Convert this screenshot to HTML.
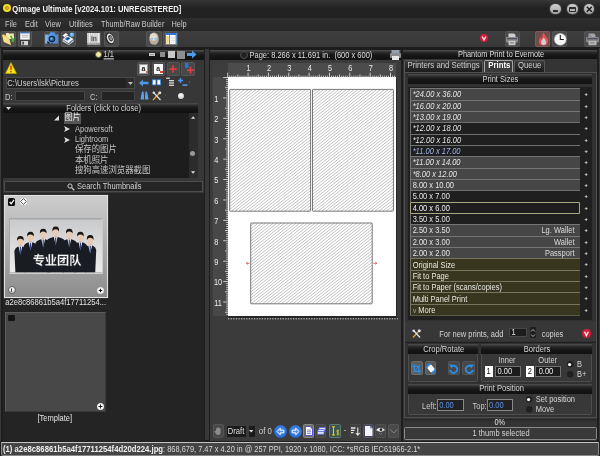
<!DOCTYPE html>
<html><head><meta charset="utf-8"><title>Qimage Ultimate</title>
<style>
html,body{margin:0;padding:0;}
body{width:600px;height:456px;overflow:hidden;background:#1d1d1d;position:relative;font-family:"Liberation Sans","Noto Sans CJK SC",sans-serif;font-size:7.5px;color:#c8c8c8;line-height:1;}
.a{position:absolute;}
.t{position:absolute;white-space:nowrap;transform:scaleY(1.1);transform-origin:0 50%;}
.bar{position:absolute;background:linear-gradient(#4e4e4e,#3b3b3b 14%,#242424 32%,#171717 55%,#111);box-sizing:border-box;text-align:center;color:#d4d4d4;}
.grp{position:absolute;border:1px solid #4e4e4e;box-sizing:border-box;background:#383838;border-radius:1.5px;}
.in{position:absolute;background:#1e1e1e;border:1px solid #555;box-sizing:border-box;}
.btn{position:absolute;background:#3f3f3f;border:1px solid #4c4c4c;box-sizing:border-box;border-radius:1.5px;}
svg{position:absolute;overflow:visible;}
</style></head><body>
<div id="app" style="position:absolute;left:0;top:0;width:600px;height:456px;will-change:transform;filter:blur(0.35px);">

<!-- TITLE BAR -->
<div class="a" id="title" style="left:0;top:0;width:600px;height:17.5px;background:linear-gradient(#363636,#2a2a2a 25%,#222 45%);"></div>
<div class="a" style="left:3px;top:4.3px;width:8px;height:8px;border-radius:50%;background:#f0e01c;"></div>
<div class="a" style="left:5px;top:6.3px;width:4px;height:4px;border-radius:50%;background:#e8b830;border:0.9px solid #c47a1c;box-sizing:border-box;"></div>
<div class="t" style="left:12.3px;top:5.9px;font-size:7.65px;font-weight:bold;color:#f2f2f2;">Qimage Ultimate [v2024.101: UNREGISTERED]</div>
<style>.wc{position:absolute;top:2.9px;width:12.6px;height:12.6px;border-radius:50%;background:linear-gradient(#cdcdcd,#a2a2a2);border:0.6px solid #3a3a3a;box-sizing:border-box;}</style>
<div class="wc" style="left:549.2px;"></div>
<div class="wc" style="left:566px;"></div>
<div class="wc" style="left:582.9px;"></div>
<div class="a" style="left:552.8px;top:9.9px;width:5.6px;height:1.7px;background:#2c2c2c;border-radius:0.6px;"></div>
<div class="a" style="left:569.1px;top:6.8px;width:6.5px;height:5.2px;border:1.1px solid #2c2c2c;border-top-width:2px;box-sizing:border-box;border-radius:0.8px;"></div>
<svg style="left:582.9px;top:2.9px;" width="13" height="13"><path d="M3.8 3.8L8.8 8.8M8.8 3.8L3.8 8.8" stroke="#1c1c1c" stroke-width="1.5"/></svg>

<!-- MENU BAR -->
<div class="a" id="menu" style="left:0;top:17.5px;width:600px;height:13px;background:linear-gradient(#2f2f2f,#272727);"></div>
<div class="t" style="left:5px;top:20.8px;font-size:7.4px;color:#cacaca;">File</div>
<div class="t" style="left:25px;top:20.8px;font-size:7.4px;color:#cacaca;">Edit</div>
<div class="t" style="left:45px;top:20.8px;font-size:7.4px;color:#cacaca;">View</div>
<div class="t" style="left:69px;top:20.8px;font-size:7.4px;color:#cacaca;">Utilities</div>
<div class="t" style="left:100.8px;top:20.8px;font-size:7.4px;transform:scale(0.975,1.1);color:#cacaca;">Thumb/Raw Builder</div>
<div class="t" style="left:171.5px;top:20.8px;font-size:7.4px;color:#cacaca;">Help</div>

<!-- TOOLBAR -->
<div class="a" id="toolbar" style="left:0;top:30.5px;width:600px;height:16.7px;background:linear-gradient(#3d3d3d,#383838);"></div>
<style>.tb{position:absolute;top:31.2px;height:15.5px;width:15px;background:#4a4a4a;border:1px solid #545454;border-radius:2px;box-sizing:border-box;}</style>
<div class="tb" style="left:1.1px;width:14.8px;"></div>
<svg style="left:0;top:0;" width="40" height="50"><path d="M5.7 33.6L8 32.8L9.8 33.8L13.6 33.2L14.2 38.4L6.5 39.5Z" fill="#f4e9b4"/><path d="M2.1 34.9L3.8 34.3L9 37.7L11.2 45.2L3.7 42Z" fill="#eccb68"/><path d="M2.4 35.2L8.6 38.2L10.4 44.4L4 41.6Z" fill="#f3de8c"/><path d="M10 36L11.6 35.6L13 39.2L14.8 38.8L13.6 42.4L10.4 41L11.8 40.4Z" fill="#3db43a"/></svg>
<div class="tb" style="left:18.3px;width:14.2px;"></div>
<svg style="left:20.1px;top:32px;" width="10" height="14"><rect x="0" y="0" width="9.9" height="13.5" rx="0.7" fill="#3a3a3a"/><rect x="0.2" y="0" width="9.5" height="7.6" fill="#f6f6f6"/><rect x="0.2" y="0" width="9.5" height="1.4" fill="#3d6db4"/><path d="M1.8 3.3H8.4M1.8 5.1H8.4" stroke="#9aa89a" stroke-width="0.7"/><rect x="1.2" y="9" width="6.9" height="4.2" fill="#d4d4d4"/><rect x="2.4" y="9.6" width="1.5" height="3" fill="#3a3a3a"/></svg>
<div class="tb" style="left:44.1px;width:14.8px;"></div>
<svg style="left:45px;top:32.4px;" width="14" height="12"><defs><linearGradient id="cam" x1="0" y1="0" x2="1" y2="0"><stop offset="0" stop-color="#8ec0f2"/><stop offset="0.35" stop-color="#5a9be2"/><stop offset="1" stop-color="#4a8ad8"/></linearGradient></defs><path d="M0.2 2.4H4.4L5.2 0.3H9.6L10.4 2.4H13.2V11.6H0.2Z" fill="url(#cam)"/><path d="M2.4 8.5Q4 12 8.5 11.6H2.4Z" fill="#0a0a10"/><circle cx="6.9" cy="7.1" r="3.3" fill="#13233c"/><circle cx="6.9" cy="7.1" r="2.2" fill="#2c5c94"/><circle cx="6.5" cy="6.6" r="1.2" fill="#6cc0f0"/></svg>
<div class="tb" style="left:60.8px;"></div>
<svg style="left:61.8px;top:32.3px;" width="14" height="13"><path d="M0.5 3.6L3.8 1L6 2.4L2.6 5.2Z" fill="#fafafa"/><path d="M0.6 7.2L5.2 3.6L11.6 7L6.8 11.2Z" fill="#eef2fa"/><path d="M2.6 6.9L5.4 4.7L8.6 6.3L5.6 8.8Z" fill="#2f7cd4"/><path d="M4.4 7.2L6.8 5.6L7.6 6L5.2 7.8Z" fill="#1a2a44"/><circle cx="10" cy="2.8" r="2.3" fill="#62aae8"/><circle cx="9.5" cy="2.3" r="1" fill="#9cd0f6"/><path d="M0.6 7.8L6.8 12.2L11.6 7.8V9.4L6.8 13L0.6 9.6Z" fill="#d0d4dc"/><path d="M7.6 10.2L10.4 8.2" stroke="#5a8ad0" stroke-width="0.8"/></svg>
<div class="tb" style="left:86.7px;width:14.7px;"></div>
<div class="a" style="left:87.3px;top:32.9px;width:13.2px;height:12px;background:#c9c9c9;"></div>
<div class="a" style="left:87.3px;top:42.5px;width:13.2px;height:2.4px;background:#8e8e8e;"></div>
<svg style="left:87.3px;top:32.9px;" width="14" height="12"><path d="M2.4 0V9.4M11.4 0V9.4" stroke="#f4f4f4" stroke-width="1"/><path d="M4.6 0V2.4M6.9 0V3.6M9.2 0V2.4" stroke="#f0f0f0" stroke-width="0.9"/><path d="M1 10.8H12.4" stroke="#e0e0e0" stroke-width="0.8" stroke-dasharray="1.4 0.8"/></svg>
<div class="t" style="left:91px;top:35.2px;font-size:7.4px;font-weight:bold;color:#505050;letter-spacing:-0.2px;transform:scale(0.9,1);">in</div>
<div class="tb" style="left:103.5px;width:15.2px;"></div>
<svg style="left:104.4px;top:32.4px;" width="12" height="13"><g transform="rotate(-22 6 6.5)"><ellipse cx="6" cy="6.5" rx="4" ry="6" fill="#1c1c1c"/><ellipse cx="6.3" cy="6.5" rx="3.2" ry="5.1" fill="#e4e4e4"/><ellipse cx="6.6" cy="6.5" rx="2" ry="3.3" fill="#3a3a3a"/><ellipse cx="6.8" cy="6.5" rx="1.1" ry="1.9" fill="#bdbdbd"/><ellipse cx="6.9" cy="6.5" rx="0.5" ry="0.9" fill="#444"/></g></svg>
<div class="tb" style="left:146px;width:15.5px;"></div>
<svg style="left:148px;top:32px;" width="12" height="14"><ellipse cx="6" cy="6.8" rx="4.8" ry="6.3" fill="#b9ad9c"/><ellipse cx="5.5" cy="5" rx="3.6" ry="3.8" fill="#e3dccf"/><path d="M2 11Q6 15 10 10.5Q8 13 6 12.5Q4 12.5 2 11Z" fill="#5a5046"/><rect x="2.6" y="6.2" width="2.4" height="1.3" fill="#7fb8e0"/><rect x="6.4" y="6.2" width="2.4" height="1.3" fill="#7fb8e0"/></svg>
<div class="tb" style="left:163px;"></div>
<svg style="left:164.7px;top:33px;" width="12" height="12"><rect x="0" y="0" width="11.6" height="11.3" fill="#fff"/><rect x="0" y="0" width="11.6" height="2" fill="#2f78d8"/><rect x="0" y="2" width="1" height="9.3" fill="#2f78d8"/><rect x="10.6" y="2" width="1" height="9.3" fill="#2f78d8"/><rect x="1.2" y="2.8" width="2.6" height="8" fill="#f2d98c"/><rect x="4" y="2" width="1.1" height="9.3" fill="#5a9ae6"/><path d="M5.6 4H10.2M5.6 5.8H10.2M5.6 7.6H10.2M5.6 9.4H10.2" stroke="#d8d8d8" stroke-width="0.8"/></svg>
<div class="a" style="left:480.1px;top:34.4px;width:8px;height:8px;border-radius:50%;background:#d41c3a;"></div>
<svg style="left:480.1px;top:34.4px;" width="8" height="8"><path d="M2.2 2.5L4 6L5.8 2.5" stroke="#fff" stroke-width="1.2" fill="none"/></svg>
<div class="tb" style="left:504.7px;"></div>
<svg style="left:506.3px;top:32.5px;" width="12" height="13"><path d="M2.5 0.5H8L9.5 2V5H2.5Z" fill="#cfcfcf"/><rect x="0" y="4" width="12" height="5.5" rx="1" fill="#8a8a8e"/><rect x="1" y="5" width="10" height="1.4" fill="#55555f"/><rect x="2.5" y="7.8" width="7" height="4.4" fill="#c8c8c8"/><rect x="4" y="9.2" width="4" height="1.2" fill="#888"/></svg>
<div class="tb" style="left:535.4px;background:#704c4a;border-color:#805a58;"></div>
<svg style="left:537.5px;top:32px;" width="11" height="14"><path d="M5.5 0.5Q6.5 3 8.5 5Q10.5 7.5 10 10Q9.5 13.5 5.5 13.5Q1 13.5 0.8 9.5Q0.8 7 2.8 5Q3 6.5 4 7Q3.5 3 5.5 0.5Z" fill="#e2545a"/><path d="M5.8 5.5Q7.2 7.8 8 9.5Q8.5 12.7 5.6 13Q2.9 12.7 3.1 10Q3.8 7.8 5.8 5.5Z" fill="#cfd2da"/></svg>
<div class="tb" style="left:552.3px;width:14.8px;"></div>
<svg style="left:553.5px;top:32.5px;" width="13" height="13"><circle cx="6.3" cy="6.3" r="5.9" fill="#f6f6f6"/><circle cx="6.3" cy="6.3" r="5.9" fill="none" stroke="#c8c8c8" stroke-width="0.6"/><path d="M6.3 2V6.5H9.8" stroke="#222" stroke-width="1.1" fill="none"/></svg>
<div class="tb" style="left:583.8px;width:17px;"></div>
<svg style="left:586px;top:32.5px;" width="13" height="13"><path d="M2.5 0.5H8L9.5 2V5H2.5Z" fill="#a4a4a4"/><path d="M2 0.5L10 9" stroke="#70707c" stroke-width="0.8"/><rect x="0" y="4" width="13" height="5.5" rx="1" fill="#85858a"/><rect x="1" y="5" width="11" height="1.4" fill="#55555f"/><rect x="2.5" y="7.8" width="8" height="4.4" fill="#b8b8b8"/><rect x="4" y="9.2" width="4.5" height="1.2" fill="#888"/></svg>

<!--LEFT-->
<div class="a" style="left:0;top:48px;width:1.3px;height:393px;background:#3a3a3a;"></div>
<div class="a" id="left" style="left:2.9px;top:49.5px;width:201px;height:391px;background:#373737;"></div>
<div class="a" style="left:205.4px;top:49.3px;width:3.5px;height:391.2px;background:#383838;"></div>
<div class="bar" style="left:2.9px;top:49.5px;width:201px;height:10px;"></div>
<div class="a" style="left:95.5px;top:51.5px;width:5px;height:5px;border-radius:50%;background:#f4ee9a;border:1px solid #5a5a4a;box-sizing:content-box;margin:-1px;"></div>
<div class="t" style="left:103.5px;top:51px;color:#d8d8d8;text-decoration:underline;">1/1</div>
<div class="a" style="left:149px;top:52.5px;width:6px;height:3px;background:#999;border:0.5px solid #ccc;box-sizing:border-box;"></div>
<div class="a" style="left:160px;top:51.5px;width:5px;height:5px;background:#8c8c8c;"></div>
<div class="a" style="left:168px;top:50.5px;width:7px;height:7px;background:#c9c9c9;"></div>
<div class="a" style="left:177px;top:50.5px;width:8px;height:8px;background:#8f8f8f;"></div>
<svg style="left:187px;top:50px;" width="10" height="9"><path d="M0 3H5V0.5L9.5 4.5L5 8.5V6H0Z" fill="#4d9be8"/></svg>

<!-- row 1: warning + buttons -->
<svg style="left:5px;top:62px;" width="12" height="12"><path d="M6 0.5L11.5 11.5H0.5Z" fill="#f5ea14" stroke="#b8a800" stroke-width="0.6"/><rect x="5.3" y="3.5" width="1.4" height="4.6" fill="#e02020"/><rect x="5.3" y="9" width="1.4" height="1.4" fill="#e02020"/></svg>
<div class="btn" style="left:137px;top:61.5px;width:12.8px;height:14.3px;background:#484848;border-color:#565656;"></div>
<div class="btn" style="left:152px;top:61.5px;width:12.8px;height:14.3px;background:#484848;border-color:#565656;"></div>
<div class="btn" style="left:166.7px;top:61.5px;width:13px;height:14.3px;background:#484848;border-color:#565656;"></div>
<div class="btn" style="left:181.3px;top:61.5px;width:14px;height:14.3px;background:#484848;border-color:#565656;"></div>
<div class="a" style="left:138.7px;top:64.2px;width:9.6px;height:9.4px;background:#f0f0f0;border:1px solid #9a9a9a;box-sizing:border-box;"></div>
<div class="t" style="left:141.5px;top:65px;font-size:7px;font-weight:bold;color:#222;">a</div>
<div class="a" style="left:145.8px;top:70.8px;width:2.5px;height:2.5px;background:#e0452a;border-radius:50%;"></div>
<div class="a" style="left:153.7px;top:64.2px;width:9.4px;height:9.4px;background:#fff;"></div>
<div class="t" style="left:156.2px;top:65px;font-size:7px;font-weight:bold;color:#222;">a</div>
<div class="a" style="left:160px;top:71.3px;width:3px;height:1.5px;background:#e0452a;"></div>
<svg style="left:169.3px;top:65px;" width="8" height="8"><path d="M4 0.3V7.7M0.3 4H7.7" stroke="#ee3a3a" stroke-width="1.5"/></svg>
<svg style="left:183.5px;top:62.8px;" width="11" height="12"><path d="M1 0H4L4.8 4L2.5 5.5L1 4Z" fill="#2f74d6"/><path d="M6.5 3.8V10.8M3 7.3H10" stroke="#ee3a3a" stroke-width="1.6"/></svg>

<!-- row 2: path -->
<div class="in" style="left:6px;top:77px;width:129px;height:12px;background:#222;border-color:#4a4a4a;"></div>
<div class="t" style="left:7.2px;top:79.6px;font-size:7.73px;color:#d4d4d4;">C:\Users\lsk\Pictures</div>
<div class="a" style="left:126px;top:78px;width:8px;height:10px;background:#2c2c2c;"></div>
<svg style="left:127.5px;top:81.5px;" width="5" height="3"><path d="M0 0H5L2.5 3Z" fill="#bbb"/></svg>
<svg style="left:138.5px;top:78.5px;" width="10" height="8"><path d="M0 4L4 0.5V2.8H9.5V5.2H4V7.5Z" fill="#4f97e6"/></svg>
<svg style="left:151.5px;top:79px;" width="9" height="7"><path d="M0 0.3H4.2V6.3H0ZM4.8 0.3H9V6.3H4.8Z" fill="#3b86dd"/><rect x="0.9" y="1.2" width="2.6" height="4.2" fill="#fff"/><rect x="5.5" y="1.2" width="2.6" height="4.2" fill="#fff"/></svg>
<svg style="left:166px;top:77px;" width="9" height="10"><rect x="0" y="0.5" width="4" height="1.5" fill="#bbb"/><rect x="3" y="3" width="5" height="1.3" fill="#ddd"/><rect x="3" y="5.3" width="5" height="1.3" fill="#ddd"/><rect x="3" y="7.6" width="5" height="1.3" fill="#ddd"/></svg>
<svg style="left:178px;top:78px;" width="12" height="9"><path d="M2.5 0V5M0 2.5H5" stroke="#4f97e6" stroke-width="1.4"/><rect x="4.5" y="6.3" width="5" height="1.6" fill="#4f97e6"/><circle cx="11.5" cy="4" r="0.6" fill="#888"/></svg>

<!-- row 3 -->
<div class="t" style="left:5px;top:93.5px;color:#c4c4c4;">D:</div>
<div class="in" style="left:15px;top:91px;width:70px;height:10px;background:#242424;border-color:#444;"></div>
<div class="t" style="left:90px;top:93.5px;color:#c4c4c4;">C:</div>
<div class="in" style="left:100.5px;top:91px;width:34.5px;height:10px;background:#242424;border-color:#444;"></div>
<svg style="left:140px;top:91px;" width="9" height="9"><path d="M0.5 8.5L1.5 2.5L2.3 0.5H3.5L4 4.5V8.5ZM8.5 8.5L7.5 2.5L6.7 0.5H5.5L5 4.5V8.5Z" fill="#5b9fe8"/></svg>
<svg style="left:152px;top:91px;" width="10" height="10"><path d="M1 9L7.5 2" stroke="#e8a33a" stroke-width="1.3"/><path d="M8.5 9L2 2" stroke="#d8d8d8" stroke-width="1.3"/><circle cx="7.8" cy="1.8" r="1.5" fill="#d8d8d8"/><circle cx="1.8" cy="1.8" r="1.3" fill="#d8d8d8"/><circle cx="13.5" cy="4" r="0.5" fill="#777"/></svg>
<div class="a" style="left:177.5px;top:92.5px;width:6px;height:6px;border-radius:50%;background:radial-gradient(circle at 40% 35%,#fff,#bbb);"></div>

<!-- Folders -->
<div class="bar" style="left:2.9px;top:103.2px;width:195.6px;height:9.6px;"></div>
<svg style="left:5.8px;top:106.7px;" width="5" height="3"><path d="M0 0H5L2.5 3Z" fill="#ddd"/></svg>
<div class="t" style="left:66.3px;top:104.6px;color:#d4d4d4;">Folders (click to close)</div>
<div class="a" id="tree" style="left:2.9px;top:112.8px;width:195.6px;height:65.7px;background:#1d1d1d;"></div>
<div class="a" style="left:63.5px;top:113px;width:17.5px;height:11px;background:#555;"></div>
<svg style="left:54px;top:115px;" width="6" height="6"><path d="M5 0.5V5.5H0Z" fill="#ddd"/></svg>
<div class="t" style="left:64.5px;top:114px;font-size:8px;color:#eee;">图片</div>
<svg style="left:64px;top:126px;" width="6" height="6"><path d="M0 0L6 3L0 6L1.5 3Z" fill="#ddd"/></svg>
<div class="t" style="left:75px;top:125.5px;color:#c4c4c4;">Apowersoft</div>
<svg style="left:64px;top:136.5px;" width="6" height="6"><path d="M0 0L6 3L0 6L1.5 3Z" fill="#ddd"/></svg>
<div class="t" style="left:75px;top:136px;color:#c4c4c4;">Lightroom</div>
<div class="t" style="left:75px;top:145.3px;font-size:8.4px;color:#c4c4c4;">保存的图片</div>
<div class="t" style="left:75px;top:155.8px;font-size:8.4px;color:#c4c4c4;">本机照片</div>
<div class="t" style="left:75px;top:166.2px;font-size:8.4px;color:#c4c4c4;">搜狗高速浏览器截图</div>
<div class="a" style="left:188.8px;top:113px;width:8.8px;height:64.5px;background:#2c2c2c;"></div>
<svg style="left:190.5px;top:115.9px;" width="5" height="3"><path d="M0 2.8H4.2L2.1 0.2Z" fill="#ddd"/></svg>
<svg style="left:190.5px;top:171.2px;" width="5" height="3"><path d="M0 0.2H4.2L2.1 2.8Z" fill="#ddd"/></svg>
<div class="a" style="left:189.9px;top:150.8px;width:5.4px;height:5.4px;border-radius:2.7px;background:#999;"></div>

<!-- Search -->
<div class="a" style="left:4px;top:181px;width:199px;height:11px;background:#252525;border:1px solid #4d4d4d;box-sizing:border-box;"></div>
<svg style="left:67px;top:182.5px;" width="8" height="8"><circle cx="3" cy="3" r="2.1" fill="none" stroke="#ccc" stroke-width="1"/><path d="M4.6 4.6L7.3 7.3" stroke="#ccc" stroke-width="1.3"/></svg>
<div class="t" style="left:77px;top:183.3px;color:#cfcfcf;">Search Thumbnails</div>

<!-- Thumbs -->
<div class="a" id="thumbs" style="left:2.9px;top:193px;width:201px;height:247.5px;background:#242424;"></div>
<div class="a" style="left:2.9px;top:193.7px;width:105.7px;height:105.1px;background:#333;"></div>
<div class="a" style="left:3.9px;top:194.7px;width:103.7px;height:103.1px;background:linear-gradient(#cdcdcd,#b4b4b4 40%,#8c8c8c);border:1.2px solid #e2e2e2;box-sizing:border-box;"></div>
<!--THUMBIMG-->
<div class="a" style="left:7.5px;top:197.8px;width:7.5px;height:8px;background:#0c0c0c;border-radius:1.6px;"></div>
<svg style="left:7.5px;top:197.8px;" width="8" height="8"><path d="M1.6 4L3.2 5.8L6 1.8" stroke="#fff" stroke-width="1.3" fill="none"/></svg>
<div class="a" style="left:19.8px;top:198.1px;width:7px;height:7px;border-radius:50%;background:#fff;"></div>
<svg style="left:19.8px;top:198.1px;" width="7" height="7"><path d="M3.5 0.6L6.4 3.5L3.5 6.4L0.6 3.5Z" fill="#fff" stroke="#222" stroke-width="0.8"/></svg>
<div class="a" style="left:8.8px;top:218px;width:94.5px;height:55.5px;background:#8e8e8e;border:1px solid #a8a8a8;border-bottom-color:#d0d0d0;border-right-color:#c8c8c8;box-sizing:border-box;"></div>
<svg style="left:0;top:0;" width="120" height="300"><defs><linearGradient id="ibg" x1="0" y1="0" x2="0" y2="1"><stop offset="0" stop-color="#c9cacc"/><stop offset="0.5" stop-color="#dcdcde"/><stop offset="1" stop-color="#ececec"/></linearGradient><clipPath id="icl"><rect x="10" y="219.3" width="92.2" height="53.2"/></clipPath></defs>
<rect x="10" y="219.3" width="92.2" height="53.2" fill="url(#ibg)"/>
<g clip-path="url(#icl)"><path d="M15.4 272.5L14.4 251.4Q14.7 248.0 18.2 246.4L22.6 246.4Q26.1 248.0 26.4 251.4L25.4 272.5Z" fill="#1a1c23"/><path d="M18.4 245.8L22.4 245.8L20.4 254.4Z" fill="#f0f0f3"/><path d="M19.8 246.7L21.0 246.7L20.8 253.8L19.9 253.8Z" fill="#2a3f8a"/><rect x="19.1" y="243.6" width="2.6" height="3" fill="#d9b49c"/><ellipse cx="20.4" cy="241.2" rx="3" ry="4.1" fill="#ebcab4"/><path d="M17.1 240.8Q16.6 235.8 20.4 235.9Q24.2 235.8 23.7 240.8Q22.4 238.4 20.4 238.7Q18.4 238.4 17.1 240.8Z" fill="#191513"/><path d="M85.2 272.5L84.2 250.6Q84.5 247.2 88.0 245.6L92.4 245.6Q95.9 247.2 96.2 250.6L95.2 272.5Z" fill="#1a1c23"/><path d="M88.2 245.0L92.2 245.0L90.2 253.6Z" fill="#f0f0f3"/><path d="M89.6 245.9L90.8 245.9L90.7 253.0L89.8 253.0Z" fill="#2a3f8a"/><rect x="88.9" y="242.8" width="2.6" height="3" fill="#d9b49c"/><ellipse cx="90.2" cy="240.4" rx="3" ry="4.1" fill="#ebcab4"/><path d="M86.9 240.0Q86.4 235.0 90.2 235.1Q94.0 235.0 93.5 240.0Q92.2 237.6 90.2 237.9Q88.2 237.6 86.9 240.0Z" fill="#191513"/><path d="M24.5 272.5L23.5 247.2Q23.8 243.8 28.3 242.2L32.7 242.2Q37.2 243.8 37.5 247.2L36.5 272.5Z" fill="#1a1c23"/><path d="M28.5 241.6L32.5 241.6L30.5 250.2Z" fill="#f0f0f3"/><path d="M29.9 242.5L31.1 242.5L30.9 249.6L30.1 249.6Z" fill="#2a3f8a"/><rect x="29.2" y="239.4" width="2.6" height="3" fill="#d9b49c"/><ellipse cx="30.5" cy="237.0" rx="3" ry="4.1" fill="#ebcab4"/><path d="M27.2 236.6Q26.7 231.6 30.5 231.7Q34.3 231.6 33.8 236.6Q32.5 234.2 30.5 234.5Q28.5 234.2 27.2 236.6Z" fill="#191513"/><path d="M74.4 272.5L73.4 247.2Q73.7 243.8 78.2 242.2L82.6 242.2Q87.1 243.8 87.4 247.2L86.4 272.5Z" fill="#1a1c23"/><path d="M78.4 241.6L82.4 241.6L80.4 250.2Z" fill="#f0f0f3"/><path d="M79.8 242.5L81.0 242.5L80.9 249.6L80.0 249.6Z" fill="#2a3f8a"/><rect x="79.1" y="239.4" width="2.6" height="3" fill="#d9b49c"/><ellipse cx="80.4" cy="237.0" rx="3" ry="4.1" fill="#ebcab4"/><path d="M77.1 236.6Q76.6 231.6 80.4 231.7Q84.2 231.6 83.7 236.6Q82.4 234.2 80.4 234.5Q78.4 234.2 77.1 236.6Z" fill="#191513"/><path d="M36.2 272.5L35.2 244.2Q35.5 240.8 41.0 239.2L45.4 239.2Q50.9 240.8 51.2 244.2L50.2 272.5Z" fill="#1a1c23"/><path d="M41.2 238.6L45.2 238.6L43.2 247.2Z" fill="#f0f0f3"/><path d="M42.6 239.5L43.8 239.5L43.7 246.6L42.8 246.6Z" fill="#2a3f8a"/><rect x="41.9" y="236.4" width="2.6" height="3" fill="#d9b49c"/><ellipse cx="43.2" cy="234.0" rx="3" ry="4.1" fill="#ebcab4"/><path d="M39.9 233.6Q39.4 228.6 43.2 228.7Q47.0 228.6 46.5 233.6Q45.2 231.2 43.2 231.5Q41.2 231.2 39.9 233.6Z" fill="#191513"/><path d="M62.3 272.5L61.3 244.2Q61.6 240.8 67.1 239.2L71.5 239.2Q77.0 240.8 77.3 244.2L76.3 272.5Z" fill="#1a1c23"/><path d="M67.3 238.6L71.3 238.6L69.3 247.2Z" fill="#f0f0f3"/><path d="M68.7 239.5L69.9 239.5L69.8 246.6L68.8 246.6Z" fill="#2a3f8a"/><rect x="68.0" y="236.4" width="2.6" height="3" fill="#d9b49c"/><ellipse cx="69.3" cy="234.0" rx="3" ry="4.1" fill="#ebcab4"/><path d="M66.0 233.6Q65.5 228.6 69.3 228.7Q73.1 228.6 72.6 233.6Q71.3 231.2 69.3 231.5Q67.3 231.2 66.0 233.6Z" fill="#191513"/><path d="M47.2 272.5L46.2 242.1Q46.5 238.7 53.5 237.1L57.9 237.1Q64.9 238.7 65.2 242.1L64.2 272.5Z" fill="#1a1c23"/><path d="M53.7 236.5L57.7 236.5L55.7 245.1Z" fill="#f0f0f3"/><path d="M55.1 237.4L56.3 237.4L56.2 244.5L55.2 244.5Z" fill="#2a3f8a"/><rect x="54.4" y="234.3" width="2.6" height="3" fill="#d9b49c"/><ellipse cx="55.7" cy="231.9" rx="3" ry="4.1" fill="#ebcab4"/><path d="M52.4 231.5Q51.9 226.5 55.7 226.6Q59.5 226.5 59.0 231.5Q57.7 229.1 55.7 229.4Q53.7 229.1 52.4 231.5Z" fill="#191513"/></g>
<text x="57" y="264.7" text-anchor="middle" font-family="Liberation Sans, Noto Sans CJK SC, sans-serif" font-weight="bold" font-size="12.2" fill="#fff" stroke="#555" stroke-width="0.25">专业团队</text>
</svg>
<div class="a" style="left:7.6px;top:286.3px;width:8.2px;height:8.2px;border-radius:50%;background:radial-gradient(circle at 40% 35%,#fff 30%,#999);border:0.6px solid #666;box-sizing:border-box;"></div>
<div class="t" style="left:10.6px;top:287.2px;font-family:'Liberation Serif',serif;font-style:italic;font-weight:bold;font-size:6.5px;color:#222;">i</div>
<div class="a" style="left:96.7px;top:286.7px;width:7.3px;height:7.3px;border-radius:50%;background:radial-gradient(#fff 50%,#999);"></div>
<svg style="left:96.85px;top:286.85px;" width="7" height="7"><path d="M3.5 1.7V5.3M1.7 3.5H5.3" stroke="#111" stroke-width="1.1"/></svg>

<div class="t" style="left:5.3px;top:299.4px;font-size:7.64px;color:#e6e6e6;">a2e8c86861b5a4f17711254...</div>
<div class="a" style="left:5.4px;top:312px;width:100.9px;height:99.9px;background:#484848;border:0.8px solid #5c5c5c;border-right-color:#3a3a3a;border-bottom-color:#3a3a3a;box-sizing:border-box;border-radius:1px;"></div>
<div class="a" style="left:8px;top:314.6px;width:6.5px;height:6.5px;background:#141414;border-radius:1.2px;"></div>
<div class="a" style="left:96.7px;top:402.7px;width:7.4px;height:7.4px;border-radius:50%;background:radial-gradient(#fff 50%,#aaa);"></div>
<svg style="left:96.9px;top:402.9px;" width="7" height="7"><path d="M3.5 1.5V5.5M1.5 3.5H5.5" stroke="#222" stroke-width="1.1"/></svg>
<div class="t" style="left:37.5px;top:414.8px;color:#e4e4e4;">[Template]</div>

<!--CENTER-->
<div class="a" id="center" style="left:209.7px;top:49.5px;width:190.9px;height:391px;background:#3b3b3b;"></div>
<div class="bar" style="left:209.7px;top:49.5px;width:190.9px;height:10.5px;"></div>
<div class="a" style="left:239.7px;top:51.4px;width:8px;height:8px;border-radius:50%;background:#222;border:1px solid #505050;box-sizing:border-box;"></div>
<div class="t" style="left:249.5px;top:52.1px;color:#dcdcdc;">Page: 8.266 x 11.691 in.&nbsp; (600 x 600)</div>
<svg style="left:389.5px;top:49.8px;" width="11" height="10"><rect x="1.5" y="0" width="8" height="4" fill="#9aa0b4"/><rect x="0" y="3" width="11" height="5" rx="1" fill="#8a8c92"/><rect x="2" y="6" width="7" height="4" fill="#e6e6e6"/></svg>
<!-- rulers -->
<div class="a" style="left:227.7px;top:62.7px;width:168.4px;height:14.3px;background:#4c4c4c;"></div>
<div class="a" style="left:212.8px;top:62.7px;width:14.9px;height:14.3px;background:#3d3d3d;"></div>
<div class="a" style="left:212.8px;top:77.0px;width:14.9px;height:239.0px;background:#484848;"></div>
<div class="a" style="left:229.29999999999998px;top:78.6px;width:168.2px;height:239.0px;background:#262626;"></div>
<div class="a" id="page" style="left:227.7px;top:77.0px;width:168.2px;height:239.0px;background:#fff;"></div>
<svg style="left:0;top:0;" width="600" height="456" font-family="Liberation Sans, sans-serif" font-size="7.4" fill="#ececec"><path d="M227.70 77.5V72.7M229.73 77.5V75.7M231.77 77.5V75.7M233.80 77.5V75.7M235.84 77.5V75.7M237.88 77.5V74.5M239.91 77.5V75.7M241.94 77.5V75.7M243.98 77.5V75.7M246.01 77.5V75.7M248.05 77.5V72.7M250.08 77.5V75.7M252.12 77.5V75.7M254.16 77.5V75.7M256.19 77.5V75.7M258.22 77.5V74.5M260.26 77.5V75.7M262.30 77.5V75.7M264.33 77.5V75.7M266.37 77.5V75.7M268.40 77.5V72.7M270.44 77.5V75.7M272.47 77.5V75.7M274.50 77.5V75.7M276.54 77.5V75.7M278.57 77.5V74.5M280.61 77.5V75.7M282.64 77.5V75.7M284.68 77.5V75.7M286.71 77.5V75.7M288.75 77.5V72.7M290.78 77.5V75.7M292.82 77.5V75.7M294.86 77.5V75.7M296.89 77.5V75.7M298.92 77.5V74.5M300.96 77.5V75.7M303.00 77.5V75.7M305.03 77.5V75.7M307.06 77.5V75.7M309.10 77.5V72.7M311.13 77.5V75.7M313.17 77.5V75.7M315.20 77.5V75.7M317.24 77.5V75.7M319.27 77.5V74.5M321.31 77.5V75.7M323.35 77.5V75.7M325.38 77.5V75.7M327.41 77.5V75.7M329.45 77.5V72.7M331.49 77.5V75.7M333.52 77.5V75.7M335.56 77.5V75.7M337.59 77.5V75.7M339.62 77.5V74.5M341.66 77.5V75.7M343.69 77.5V75.7M345.73 77.5V75.7M347.76 77.5V75.7M349.80 77.5V72.7M351.84 77.5V75.7M353.87 77.5V75.7M355.90 77.5V75.7M357.94 77.5V75.7M359.98 77.5V74.5M362.01 77.5V75.7M364.04 77.5V75.7M366.08 77.5V75.7M368.12 77.5V75.7M370.15 77.5V72.7M372.19 77.5V75.7M374.22 77.5V75.7M376.25 77.5V75.7M378.29 77.5V75.7M380.32 77.5V74.5M382.36 77.5V75.7M384.39 77.5V75.7M386.43 77.5V75.7M388.47 77.5V75.7M390.50 77.5V72.7M392.53 77.5V75.7M394.57 77.5V75.7M228.0 77.50H223.2M228.0 79.54H226.2M228.0 81.58H226.2M228.0 83.62H226.2M228.0 85.66H226.2M228.0 87.70H225.0M228.0 89.75H226.2M228.0 91.79H226.2M228.0 93.83H226.2M228.0 95.87H226.2M228.0 97.91H223.2M228.0 99.95H226.2M228.0 101.99H226.2M228.0 104.03H226.2M228.0 106.07H226.2M228.0 108.11H225.0M228.0 110.16H226.2M228.0 112.20H226.2M228.0 114.24H226.2M228.0 116.28H226.2M228.0 118.32H223.2M228.0 120.36H226.2M228.0 122.40H226.2M228.0 124.44H226.2M228.0 126.48H226.2M228.0 128.53H225.0M228.0 130.57H226.2M228.0 132.61H226.2M228.0 134.65H226.2M228.0 136.69H226.2M228.0 138.73H223.2M228.0 140.77H226.2M228.0 142.81H226.2M228.0 144.85H226.2M228.0 146.89H226.2M228.0 148.94H225.0M228.0 150.98H226.2M228.0 153.02H226.2M228.0 155.06H226.2M228.0 157.10H226.2M228.0 159.14H223.2M228.0 161.18H226.2M228.0 163.22H226.2M228.0 165.26H226.2M228.0 167.30H226.2M228.0 169.34H225.0M228.0 171.39H226.2M228.0 173.43H226.2M228.0 175.47H226.2M228.0 177.51H226.2M228.0 179.55H223.2M228.0 181.59H226.2M228.0 183.63H226.2M228.0 185.67H226.2M228.0 187.71H226.2M228.0 189.75H225.0M228.0 191.80H226.2M228.0 193.84H226.2M228.0 195.88H226.2M228.0 197.92H226.2M228.0 199.96H223.2M228.0 202.00H226.2M228.0 204.04H226.2M228.0 206.08H226.2M228.0 208.12H226.2M228.0 210.17H225.0M228.0 212.21H226.2M228.0 214.25H226.2M228.0 216.29H226.2M228.0 218.33H226.2M228.0 220.37H223.2M228.0 222.41H226.2M228.0 224.45H226.2M228.0 226.49H226.2M228.0 228.53H226.2M228.0 230.57H225.0M228.0 232.62H226.2M228.0 234.66H226.2M228.0 236.70H226.2M228.0 238.74H226.2M228.0 240.78H223.2M228.0 242.82H226.2M228.0 244.86H226.2M228.0 246.90H226.2M228.0 248.94H226.2M228.0 250.98H225.0M228.0 253.03H226.2M228.0 255.07H226.2M228.0 257.11H226.2M228.0 259.15H226.2M228.0 261.19H223.2M228.0 263.23H226.2M228.0 265.27H226.2M228.0 267.31H226.2M228.0 269.35H226.2M228.0 271.39H225.0M228.0 273.44H226.2M228.0 275.48H226.2M228.0 277.52H226.2M228.0 279.56H226.2M228.0 281.60H223.2M228.0 283.64H226.2M228.0 285.68H226.2M228.0 287.72H226.2M228.0 289.76H226.2M228.0 291.81H225.0M228.0 293.85H226.2M228.0 295.89H226.2M228.0 297.93H226.2M228.0 299.97H226.2M228.0 302.01H223.2M228.0 304.05H226.2M228.0 306.09H226.2M228.0 308.13H226.2M228.0 310.17H226.2M228.0 312.22H225.0M228.0 314.26H226.2" stroke="#ececec" stroke-width="0.8" fill="none"/><text x="248.6" y="64.45" transform="scale(1,1.1)" text-anchor="middle">1</text><text x="269.0" y="64.45" transform="scale(1,1.1)" text-anchor="middle">2</text><text x="289.4" y="64.45" transform="scale(1,1.1)" text-anchor="middle">3</text><text x="309.7" y="64.45" transform="scale(1,1.1)" text-anchor="middle">4</text><text x="330.1" y="64.45" transform="scale(1,1.1)" text-anchor="middle">5</text><text x="350.4" y="64.45" transform="scale(1,1.1)" text-anchor="middle">6</text><text x="370.8" y="64.45" transform="scale(1,1.1)" text-anchor="middle">7</text><text x="391.1" y="64.45" transform="scale(1,1.1)" text-anchor="middle">8</text><text x="216.3" y="92.46" transform="scale(1,1.1)" text-anchor="middle">1</text><text x="216.3" y="111.02" transform="scale(1,1.1)" text-anchor="middle">2</text><text x="216.3" y="129.57" transform="scale(1,1.1)" text-anchor="middle">3</text><text x="216.3" y="148.13" transform="scale(1,1.1)" text-anchor="middle">4</text><text x="216.3" y="166.68" transform="scale(1,1.1)" text-anchor="middle">5</text><text x="216.3" y="185.24" transform="scale(1,1.1)" text-anchor="middle">6</text><text x="216.3" y="203.79" transform="scale(1,1.1)" text-anchor="middle">7</text><text x="216.3" y="222.35" transform="scale(1,1.1)" text-anchor="middle">8</text><text x="216.3" y="240.90" transform="scale(1,1.1)" text-anchor="middle">9</text><text x="218.0" y="259.45" transform="scale(1,1.1)" text-anchor="middle">10</text><text x="218.0" y="278.01" transform="scale(1,1.1)" text-anchor="middle">11</text>
<clipPath id="c1"><rect x="229.7" y="89.4" width="80.9" height="121.8" rx="0.6"/></clipPath><rect x="229.7" y="89.4" width="80.9" height="121.8" rx="0.6" fill="#fff"/><path clip-path="url(#c1)" d="M75.52 211.20L229.70 89.40M79.32 211.20L233.50 89.40M83.12 211.20L237.30 89.40M86.92 211.20L241.10 89.40M90.72 211.20L244.90 89.40M94.52 211.20L248.70 89.40M98.32 211.20L252.50 89.40M102.12 211.20L256.30 89.40M105.92 211.20L260.10 89.40M109.72 211.20L263.90 89.40M113.52 211.20L267.70 89.40M117.32 211.20L271.50 89.40M121.12 211.20L275.30 89.40M124.92 211.20L279.10 89.40M128.72 211.20L282.90 89.40M132.52 211.20L286.70 89.40M136.32 211.20L290.50 89.40M140.12 211.20L294.30 89.40M143.92 211.20L298.10 89.40M147.72 211.20L301.90 89.40M151.52 211.20L305.70 89.40M155.32 211.20L309.50 89.40M159.12 211.20L313.30 89.40M162.92 211.20L317.10 89.40M166.72 211.20L320.90 89.40M170.52 211.20L324.70 89.40M174.32 211.20L328.50 89.40M178.12 211.20L332.30 89.40M181.92 211.20L336.10 89.40M185.72 211.20L339.90 89.40M189.52 211.20L343.70 89.40M193.32 211.20L347.50 89.40M197.12 211.20L351.30 89.40M200.92 211.20L355.10 89.40M204.72 211.20L358.90 89.40M208.52 211.20L362.70 89.40M212.32 211.20L366.50 89.40M216.12 211.20L370.30 89.40M219.92 211.20L374.10 89.40M223.72 211.20L377.90 89.40M227.52 211.20L381.70 89.40M231.32 211.20L385.50 89.40M235.12 211.20L389.30 89.40M238.92 211.20L393.10 89.40M242.72 211.20L396.90 89.40M246.52 211.20L400.70 89.40M250.32 211.20L404.50 89.40M254.12 211.20L408.30 89.40M257.92 211.20L412.10 89.40M261.72 211.20L415.90 89.40M265.52 211.20L419.70 89.40M269.32 211.20L423.50 89.40M273.12 211.20L427.30 89.40M276.92 211.20L431.10 89.40M280.72 211.20L434.90 89.40M284.52 211.20L438.70 89.40M288.32 211.20L442.50 89.40M292.12 211.20L446.30 89.40M295.92 211.20L450.10 89.40M299.72 211.20L453.90 89.40M303.52 211.20L457.70 89.40M307.32 211.20L461.50 89.40" stroke="#bfbfbf" stroke-width="0.95" fill="none"/><rect x="229.7" y="89.4" width="80.9" height="121.8" rx="0.6" fill="none" stroke="#4c4c4c" stroke-width="0.75"/><clipPath id="c2"><rect x="312.5" y="89.4" width="80.9" height="121.8" rx="0.6"/></clipPath><rect x="312.5" y="89.4" width="80.9" height="121.8" rx="0.6" fill="#fff"/><path clip-path="url(#c2)" d="M158.32 211.20L312.50 89.40M162.12 211.20L316.30 89.40M165.92 211.20L320.10 89.40M169.72 211.20L323.90 89.40M173.52 211.20L327.70 89.40M177.32 211.20L331.50 89.40M181.12 211.20L335.30 89.40M184.92 211.20L339.10 89.40M188.72 211.20L342.90 89.40M192.52 211.20L346.70 89.40M196.32 211.20L350.50 89.40M200.12 211.20L354.30 89.40M203.92 211.20L358.10 89.40M207.72 211.20L361.90 89.40M211.52 211.20L365.70 89.40M215.32 211.20L369.50 89.40M219.12 211.20L373.30 89.40M222.92 211.20L377.10 89.40M226.72 211.20L380.90 89.40M230.52 211.20L384.70 89.40M234.32 211.20L388.50 89.40M238.12 211.20L392.30 89.40M241.92 211.20L396.10 89.40M245.72 211.20L399.90 89.40M249.52 211.20L403.70 89.40M253.32 211.20L407.50 89.40M257.12 211.20L411.30 89.40M260.92 211.20L415.10 89.40M264.72 211.20L418.90 89.40M268.52 211.20L422.70 89.40M272.32 211.20L426.50 89.40M276.12 211.20L430.30 89.40M279.92 211.20L434.10 89.40M283.72 211.20L437.90 89.40M287.52 211.20L441.70 89.40M291.32 211.20L445.50 89.40M295.12 211.20L449.30 89.40M298.92 211.20L453.10 89.40M302.72 211.20L456.90 89.40M306.52 211.20L460.70 89.40M310.32 211.20L464.50 89.40M314.12 211.20L468.30 89.40M317.92 211.20L472.10 89.40M321.72 211.20L475.90 89.40M325.52 211.20L479.70 89.40M329.32 211.20L483.50 89.40M333.12 211.20L487.30 89.40M336.92 211.20L491.10 89.40M340.72 211.20L494.90 89.40M344.52 211.20L498.70 89.40M348.32 211.20L502.50 89.40M352.12 211.20L506.30 89.40M355.92 211.20L510.10 89.40M359.72 211.20L513.90 89.40M363.52 211.20L517.70 89.40M367.32 211.20L521.50 89.40M371.12 211.20L525.30 89.40M374.92 211.20L529.10 89.40M378.72 211.20L532.90 89.40M382.52 211.20L536.70 89.40M386.32 211.20L540.50 89.40M390.12 211.20L544.30 89.40" stroke="#bfbfbf" stroke-width="0.95" fill="none"/><rect x="312.5" y="89.4" width="80.9" height="121.8" rx="0.6" fill="none" stroke="#4c4c4c" stroke-width="0.75"/><clipPath id="c3"><rect x="250.7" y="223.0" width="121.5" height="80.8" rx="0.6"/></clipPath><rect x="250.7" y="223.0" width="121.5" height="80.8" rx="0.6" fill="#fff"/><path clip-path="url(#c3)" d="M148.42 303.80L250.70 223.00M152.22 303.80L254.50 223.00M156.02 303.80L258.30 223.00M159.82 303.80L262.10 223.00M163.62 303.80L265.90 223.00M167.42 303.80L269.70 223.00M171.22 303.80L273.50 223.00M175.02 303.80L277.30 223.00M178.82 303.80L281.10 223.00M182.62 303.80L284.90 223.00M186.42 303.80L288.70 223.00M190.22 303.80L292.50 223.00M194.02 303.80L296.30 223.00M197.82 303.80L300.10 223.00M201.62 303.80L303.90 223.00M205.42 303.80L307.70 223.00M209.22 303.80L311.50 223.00M213.02 303.80L315.30 223.00M216.82 303.80L319.10 223.00M220.62 303.80L322.90 223.00M224.42 303.80L326.70 223.00M228.22 303.80L330.50 223.00M232.02 303.80L334.30 223.00M235.82 303.80L338.10 223.00M239.62 303.80L341.90 223.00M243.42 303.80L345.70 223.00M247.22 303.80L349.50 223.00M251.02 303.80L353.30 223.00M254.82 303.80L357.10 223.00M258.62 303.80L360.90 223.00M262.42 303.80L364.70 223.00M266.22 303.80L368.50 223.00M270.02 303.80L372.30 223.00M273.82 303.80L376.10 223.00M277.62 303.80L379.90 223.00M281.42 303.80L383.70 223.00M285.22 303.80L387.50 223.00M289.02 303.80L391.30 223.00M292.82 303.80L395.10 223.00M296.62 303.80L398.90 223.00M300.42 303.80L402.70 223.00M304.22 303.80L406.50 223.00M308.02 303.80L410.30 223.00M311.82 303.80L414.10 223.00M315.62 303.80L417.90 223.00M319.42 303.80L421.70 223.00M323.22 303.80L425.50 223.00M327.02 303.80L429.30 223.00M330.82 303.80L433.10 223.00M334.62 303.80L436.90 223.00M338.42 303.80L440.70 223.00M342.22 303.80L444.50 223.00M346.02 303.80L448.30 223.00M349.82 303.80L452.10 223.00M353.62 303.80L455.90 223.00M357.42 303.80L459.70 223.00M361.22 303.80L463.50 223.00M365.02 303.80L467.30 223.00M368.82 303.80L471.10 223.00" stroke="#bfbfbf" stroke-width="0.95" fill="none"/><rect x="250.7" y="223.0" width="121.5" height="80.8" rx="0.6" fill="none" stroke="#4c4c4c" stroke-width="0.75"/>
<path d="M246.3 263.3H249.8M246.3 263.3L247.8 262.2M246.3 263.3L247.8 264.4M373.2 263.3H376.8M376.8 263.3L375.3 262.2M376.8 263.3L375.3 264.4" stroke="#e04040" stroke-width="0.7" fill="none"/>
<path d="M228 318.8H398" stroke="#d8d8d8" stroke-width="1" stroke-dasharray="1.3 1.3"/>
</svg>
<!--CENTERBOTTOM-->
<div class="btn" style="left:212.5px;top:424px;width:11.5px;height:14px;background:#484848;border-color:#555;"></div>
<svg style="left:214px;top:427px;" width="9" height="9"><path d="M2 4V2.2Q2 1.5 2.7 1.5V0.8Q3.4 0.2 4 0.8Q4.8 0.3 5.3 1Q6.2 0.8 6.5 1.6V5.5Q6.5 8 4.5 8Q2.8 8 1.8 6.5L0.5 4.5Q0.8 3.5 2 4Z" fill="#8c8c8c"/></svg>
<div class="in" style="left:226px;top:425px;width:20.5px;height:12.5px;background:#1b1b1b;border-color:#3c3c3c;"></div>
<div class="t" style="left:227.8px;top:427.8px;font-size:7.6px;color:#dedede;">Draft</div>
<div class="in" style="left:247.5px;top:425px;width:8px;height:12.5px;background:#1b1b1b;border-color:#3c3c3c;"></div>
<svg style="left:249.3px;top:430px;" width="5" height="3"><path d="M0 0H4.4L2.2 2.6Z" fill="#e0e0e0"/></svg>
<div class="t" style="left:258.8px;top:427.8px;font-size:7.8px;color:#d2d2d2;">of 0</div>
<div class="a" style="left:274px;top:424.7px;width:13px;height:13px;border-radius:50%;background:radial-gradient(circle at 50% 45%,#5b9cf0,#2467cf 70%,#1a4fa8);"></div>
<div class="a" style="left:288.5px;top:424.7px;width:13px;height:13px;border-radius:50%;background:radial-gradient(circle at 50% 45%,#5b9cf0,#2467cf 70%,#1a4fa8);"></div>
<svg style="left:274px;top:424.7px;" width="13" height="13"><path d="M3 6.5L6.2 3.3V5.2H9.8V7.8H6.2V9.7Z" fill="none" stroke="#fff" stroke-width="1"/></svg>
<svg style="left:288.5px;top:424.7px;" width="13" height="13"><path d="M10 6.5L6.8 3.3V5.2H3.2V7.8H6.8V9.7Z" fill="none" stroke="#fff" stroke-width="1"/></svg>
<div class="btn" style="left:303px;top:424px;width:11px;height:14px;background:#6c6c6c;border-color:#8a8a8a;"></div>
<svg style="left:305px;top:426px;" width="8" height="10"><path d="M0.5 0.5H5L7.5 3V9.5H0.5Z" fill="#fff" stroke="#5656d8" stroke-width="1"/><path d="M2 4H6M2 5.7H6M2 7.4H6" stroke="#6a6ad8" stroke-width="0.8"/></svg>
<div class="btn" style="left:315.3px;top:424px;width:11px;height:14px;background:#454545;border-color:#505050;"></div>
<svg style="left:316.5px;top:427px;" width="9" height="8"><path d="M2 0.5H8.5V3H2Z" fill="#dfe4ff" stroke="#5a6ad8" stroke-width="0.8"/><path d="M1 2.5H7.5V5H1Z" fill="#dfe4ff" stroke="#5a6ad8" stroke-width="0.8"/><path d="M0.4 4.5H7V7.3H0.4Z" fill="#dfe4ff" stroke="#5a6ad8" stroke-width="0.8"/></svg>
<div class="btn" style="left:329px;top:424px;width:12px;height:14px;background:#3d5454;border-color:#5a7a7a;"></div>
<svg style="left:331px;top:426px;" width="9" height="10"><path d="M1 0.8H4M2.5 0.8V9M1 9H4" stroke="#e6d020" stroke-width="1.1" fill="none"/><path d="M8 4.8Q6.8 3.8 5.8 4.8Q5.5 6 7 6.5Q8.3 7.2 7.5 8.3Q6.5 9 5.5 8M6.9 3.6V9.6" stroke="#e6d020" stroke-width="0.8" fill="none"/></svg>
<div class="a" style="left:344.3px;top:429.7px;width:1.5px;height:1.5px;border-radius:50%;background:#aaa;"></div>
<div class="btn" style="left:349.5px;top:424px;width:11.5px;height:14px;background:#404040;border-color:#4a4a4a;"></div>
<svg style="left:351px;top:426.5px;" width="9" height="9"><path d="M0 1H4.5M0 3.3H3.5M0 5.6H2.5" stroke="#e8e8e8" stroke-width="1.3"/><path d="M6.8 0.5V8M4.8 6L6.8 8.2L8.8 6" stroke="#e8e8e8" stroke-width="1.1" fill="none"/></svg>
<div class="btn" style="left:362.5px;top:424px;width:11px;height:14px;background:#454555;border-color:#55556a;"></div>
<svg style="left:364.5px;top:426px;" width="8" height="10"><path d="M0 0H5L7.5 2.5V10H0Z" fill="#f4f4ff"/><path d="M5 0V2.5H7.5Z" fill="#8a8ad8"/></svg>
<div class="btn" style="left:374.7px;top:424px;width:11px;height:14px;background:#454545;border-color:#505050;"></div>
<svg style="left:376px;top:427px;" width="9" height="8"><path d="M0 3Q4.5 -1.5 9 3Q4.5 6.5 0 3Z" fill="#f0f0f0"/><circle cx="5" cy="2.7" r="1.4" fill="#222"/><path d="M3 6L4.5 7.5L6 6" stroke="#888" stroke-width="0.7" fill="none"/></svg>
<div class="btn" style="left:387.5px;top:424px;width:11.5px;height:14px;background:#4a4a4a;border-color:#565656;"></div>
<svg style="left:389.5px;top:428.5px;" width="8" height="5"><path d="M0.3 0.5L3.8 4L7.3 0.5" stroke="#8e8e8e" stroke-width="0.9" fill="none"/></svg>


<!--RIGHT-->
<div class="a" id="right" style="left:403.4px;top:49.5px;width:193.6px;height:391px;background:#343434;"></div>
<div class="a" style="left:598.7px;top:48px;width:1.3px;height:393px;background:#3a3a3a;"></div>
<div class="bar" style="left:403.4px;top:49.5px;width:193.6px;height:9.9px;"></div>
<div class="t" style="left:457.5px;top:51.3px;font-size:7.5px;transform:scale(0.98,1.1);color:#dcdcdc;">Phantom Print to Evernote</div>
<!-- tabs -->
<div class="a" style="left:403.7px;top:60.2px;width:79.3px;height:11.5px;background:linear-gradient(#3c3c3c,#2a2a2a 50%,#1c1c1c);border:1px solid #585858;border-bottom:none;border-radius:2px 2px 0 0;box-sizing:border-box;"></div>
<div class="t" style="left:407.5px;top:62.2px;font-size:7.78px;color:#cdcdcd;">Printers and Settings</div>
<div class="a" style="left:484.2px;top:59.8px;width:29px;height:12.2px;background:#3a3a3a;border:1px solid #a8a8a8;border-bottom:none;border-radius:2px 2px 0 0;box-sizing:border-box;"></div>
<div class="t" style="left:488.3px;top:61.7px;font-size:7.8px;font-weight:bold;color:#fff;">Prints</div>
<div class="a" style="left:514.2px;top:60.2px;width:30.5px;height:11.5px;background:linear-gradient(#3c3c3c,#2a2a2a 50%,#1c1c1c);border:1px solid #585858;border-bottom:none;border-radius:2px 2px 0 0;box-sizing:border-box;"></div>
<div class="t" style="left:518px;top:62.2px;font-size:7.78px;color:#cdcdcd;">Queue</div>
<div class="a" style="left:404px;top:71.7px;width:192.5px;height:346px;background:#313131;border:1px solid #505050;box-sizing:border-box;"></div>
<div class="bar" style="left:408.3px;top:73.7px;width:184.2px;height:10.3px;"></div>
<div class="t" style="left:482.5px;top:75.7px;color:#d6d6d6;">Print Sizes</div>
<style>.row{left:409.8px;width:170.4px;height:11.39px;border-top:1px solid;border-left:1px solid;box-sizing:border-box;}.plus{left:584.6px;font-size:5.6px;font-weight:bold;color:#f0f0f0;}</style>
<div class="a" style="left:408.2px;top:86.6px;width:184.3px;height:233.6px;background:#202020;"></div>
<div class="a" style="left:409.8px;top:314.9px;width:170.4px;height:1px;background:#5a5a4a;"></div>
<div class="a row" style="top:88.20px;background:#464646;border-color:#767676;"></div>
<div class="t" style="left:412.7px;top:91.40px;color:#e6e6e6;font-style:italic;">*24.00 x 36.00</div>
<div class="t plus" style="top:92.30px;">+</div>
<div class="a row" style="top:99.54px;background:#464646;border-color:#767676;"></div>
<div class="t" style="left:412.7px;top:102.74px;color:#e6e6e6;font-style:italic;">*16.00 x 20.00</div>
<div class="t plus" style="top:103.64px;">+</div>
<div class="a row" style="top:110.88px;background:#464646;border-color:#767676;"></div>
<div class="t" style="left:412.7px;top:114.08px;color:#e6e6e6;font-style:italic;">*13.00 x 19.00</div>
<div class="t plus" style="top:114.98px;">+</div>
<div class="a row" style="top:122.22px;background:#1f1f1f;border-color:#707070;"></div>
<div class="t" style="left:412.7px;top:125.42px;color:#e6e6e6;font-style:italic;">*12.00 x 18.00</div>
<div class="t plus" style="top:126.32px;">+</div>
<div class="a row" style="top:133.56px;background:#1f1f1f;border-color:#707070;"></div>
<div class="t" style="left:412.7px;top:136.76px;color:#e6e6e6;font-style:italic;">*12.00 x 16.00</div>
<div class="t plus" style="top:137.66px;">+</div>
<div class="a row" style="top:144.90px;background:#1f1f1f;border-color:#707070;"></div>
<div class="t" style="left:412.7px;top:148.10px;color:#9db4e6;font-style:italic;">*11.00 x 17.00</div>
<div class="t plus" style="top:149.00px;">+</div>
<div class="a row" style="top:156.24px;background:#464646;border-color:#767676;"></div>
<div class="t" style="left:412.7px;top:159.44px;color:#e6e6e6;font-style:italic;">*11.00 x 14.00</div>
<div class="t plus" style="top:160.34px;">+</div>
<div class="a row" style="top:167.58px;background:#464646;border-color:#767676;"></div>
<div class="t" style="left:412.7px;top:170.78px;color:#e6e6e6;font-style:italic;">*8.00 x 12.00</div>
<div class="t plus" style="top:171.68px;">+</div>
<div class="a row" style="top:178.92px;background:#464646;border-color:#767676;"></div>
<div class="t" style="left:412.7px;top:182.12px;color:#e6e6e6;">8.00 x 10.00</div>
<div class="t plus" style="top:183.02px;">+</div>
<div class="a row" style="top:190.26px;background:#1f1f1f;border-color:#707070;"></div>
<div class="t" style="left:412.7px;top:193.46px;color:#e6e6e6;">5.00 x 7.00</div>
<div class="t plus" style="top:194.36px;">+</div>
<div class="a row" style="top:201.6px;background:#1e1e1e;border-color:#707070;"></div>
<div class="t" style="left:412.7px;top:204.80px;color:#f0f0f0;">4.00 x 6.00</div>
<div class="t plus" style="top:205.70px;">+</div>
<div class="a row" style="top:212.94px;background:#1f1f1f;border-color:#707070;"></div>
<div class="t" style="left:412.7px;top:216.14px;color:#e6e6e6;">3.50 x 5.00</div>
<div class="t plus" style="top:217.04px;">+</div>
<div class="a row" style="top:224.28px;background:#464646;border-color:#767676;"></div>
<div class="t" style="left:412.7px;top:227.48px;color:#e6e6e6;">2.50 x 3.50</div>
<div class="t" style="right:25.5px;top:227.48px;color:#dcdcdc;">Lg. Wallet</div>
<div class="t plus" style="top:228.38px;">+</div>
<div class="a row" style="top:235.62px;background:#464646;border-color:#767676;"></div>
<div class="t" style="left:412.7px;top:238.82px;color:#e6e6e6;">2.00 x 3.00</div>
<div class="t" style="right:25.5px;top:238.82px;color:#dcdcdc;">Wallet</div>
<div class="t plus" style="top:239.72px;">+</div>
<div class="a row" style="top:246.96px;background:#464646;border-color:#767676;"></div>
<div class="t" style="left:412.7px;top:250.16px;color:#e6e6e6;">2.00 x 2.00</div>
<div class="t" style="right:25.5px;top:250.16px;color:#dcdcdc;">Passport</div>
<div class="t plus" style="top:251.06px;">+</div>
<div class="a row" style="top:258.30px;background:#38361f;border-color:#77755e;"></div>
<div class="t" style="left:412.7px;top:261.50px;color:#e8e8e0;">Original Size</div>
<div class="t plus" style="top:262.40px;">+</div>
<div class="a row" style="top:269.64px;background:#38361f;border-color:#77755e;"></div>
<div class="t" style="left:412.7px;top:272.84px;color:#e8e8e0;">Fit to Page</div>
<div class="t plus" style="top:273.74px;">+</div>
<div class="a row" style="top:280.98px;background:#38361f;border-color:#77755e;"></div>
<div class="t" style="left:412.7px;top:284.18px;color:#e8e8e0;">Fit to Paper (scans/copies)</div>
<div class="t plus" style="top:285.08px;">+</div>
<div class="a row" style="top:292.32px;background:#38361f;border-color:#77755e;"></div>
<div class="t" style="left:412.7px;top:295.52px;color:#e8e8e0;">Multi Panel Print</div>
<div class="t plus" style="top:296.42px;">+</div>
<div class="a row" style="top:303.66px;background:#38361f;border-color:#77755e;"></div>
<div class="t" style="left:413px;top:306.86px;color:#e8e8e0;"><span style="font-size:6.5px;color:#aaa;">v</span> More</div>
<div class="t plus" style="top:307.76px;">+</div>
<div class="a" style="left:409.8px;top:201.50px;width:170.6px;height:12.64px;border:1.2px solid #aaa680;box-sizing:border-box;border-radius:1px;"></div>
<!-- copies -->
<div class="a" style="left:405px;top:320.6px;width:191px;height:20.6px;background:#373737;"></div>
<svg style="left:412px;top:329px;" width="9" height="9"><path d="M1 8.5L7 2" stroke="#e8a33a" stroke-width="1.3"/><path d="M8 8.5L2 2" stroke="#e0e0e0" stroke-width="1.3"/><circle cx="7.3" cy="1.7" r="1.5" fill="#e0e0e0"/><circle cx="1.7" cy="1.7" r="1.3" fill="#e0e0e0"/></svg>
<div class="t" style="left:439.2px;top:330.7px;color:#d4d4d4;">For new prints, add</div>
<div class="in" style="left:509px;top:327.5px;width:17.5px;height:9.5px;background:#1d1d1d;border-color:#484848;"></div>
<div class="t" style="left:511.5px;top:328.8px;color:#e6e6e6;">1</div>
<div class="a" style="left:529.7px;top:327px;width:6.3px;height:10.5px;background:#1f1f1f;border-radius:1px;"></div>
<svg style="left:530.8px;top:328.5px;" width="4" height="8"><path d="M0 2.5L2 0.5L4 2.5M0 5.5L2 7.5L4 5.5" stroke="#d0d0d0" stroke-width="0.8" fill="none"/></svg>
<div class="t" style="left:541.7px;top:330.7px;color:#d4d4d4;">copies</div>
<div class="a" style="left:582.3px;top:329.3px;width:8.8px;height:8.8px;border-radius:50%;background:#d61e3c;"></div>
<svg style="left:582.3px;top:329.3px;" width="9" height="9"><path d="M2.5 2.8L4.4 6.6L6.3 2.8" stroke="#fff" stroke-width="1.3" fill="none"/></svg>
<div class="a" style="left:404.5px;top:341.5px;width:191.5px;height:1px;background:#1f1f1f;"></div>
<!-- crop/rotate -->
<div class="grp" style="left:408.3px;top:343.5px;width:69.5px;height:38px;"></div>
<div class="bar" style="left:408.3px;top:344px;width:69.5px;height:10.3px;"></div>
<div class="t" style="left:423.3px;top:345.6px;font-size:7.6px;color:#d6d6d6;">Crop/Rotate</div>
<div class="btn" style="left:411px;top:361.3px;width:11.8px;height:14.2px;background:#5c5c5c;border-color:#6c6c6c;border-radius:2px;"></div>
<div class="btn" style="left:424.7px;top:361.3px;width:11.8px;height:14.2px;background:#585858;border-color:#686868;border-radius:2px;"></div>
<div class="btn" style="left:447.5px;top:361.3px;width:12.7px;height:14.2px;background:#484848;border-color:#545454;border-radius:2px;"></div>
<div class="btn" style="left:462.3px;top:361.3px;width:12.7px;height:14.2px;background:#484848;border-color:#545454;border-radius:2px;"></div>
<svg style="left:412.4px;top:363.6px;" width="9" height="10"><path d="M2.2 0V7.3H9M0 2.3H6.8V9.6" stroke="#2a8ee6" stroke-width="1.3" fill="none"/><path d="M1 8.5L8 1.2" stroke="#2a8ee6" stroke-width="0.8"/></svg>
<svg style="left:425.6px;top:363.2px;" width="10" height="11"><rect x="2.4" y="2.3" width="5.2" height="6.4" rx="0.6" fill="#f4f4f4" transform="rotate(-40 5 5.5)"/><path d="M0.9 5.2Q0.8 1.6 4.6 0.9M9.1 5.8Q9.2 9.4 5.4 10.1" stroke="#2a8ee6" stroke-width="1.5" fill="none"/></svg>
<svg style="left:449.2px;top:363.6px;" width="10" height="10"><path d="M2.3 2.6A3.6 3.6 0 1 1 1.1 6" stroke="#2a8ee6" stroke-width="1.9" fill="none"/><path d="M0 0.6L4.3 0.8L2.6 4.6Z" fill="#2a8ee6"/></svg>
<svg style="left:463.8px;top:363.6px;" width="10" height="10"><path d="M7.7 2.6A3.6 3.6 0 1 0 8.9 6" stroke="#2a8ee6" stroke-width="1.9" fill="none"/><path d="M10 0.6L5.7 0.8L7.4 4.6Z" fill="#2a8ee6"/></svg>
<!-- borders -->
<div class="grp" style="left:481.3px;top:343.5px;width:111.2px;height:38px;"></div>
<div class="bar" style="left:481.3px;top:344px;width:111.2px;height:10.3px;"></div>
<div class="t" style="left:523.8px;top:345.6px;font-size:7.6px;color:#d6d6d6;">Borders</div>
<div class="t" style="left:498.5px;top:356.5px;color:#d0d0d0;">Inner</div>
<div class="t" style="left:538.3px;top:356.5px;color:#d0d0d0;">Outer</div>
<div class="a" style="left:484.5px;top:366px;width:8px;height:11.2px;background:#fff;"></div>
<div class="t" style="left:486.4px;top:368.1px;color:#111;">1</div>
<div class="in" style="left:494.5px;top:366px;width:26.5px;height:11px;background:#1c1c1c;border-color:#707070;"></div>
<div class="t" style="left:497.5px;top:368.1px;color:#f0f0f0;">0.00</div>
<div class="a" style="left:525.8px;top:366px;width:8.2px;height:11.2px;background:#fff;"></div>
<div class="t" style="left:527.8px;top:368.1px;color:#111;">2</div>
<div class="in" style="left:535.3px;top:366px;width:25.3px;height:11px;background:#1c1c1c;border-color:#707070;"></div>
<div class="t" style="left:538.7px;top:368.1px;color:#f0f0f0;">0.00</div>
<svg style="left:566.5px;top:361.4px;" width="7" height="7"><circle cx="3.3" cy="3.3" r="3.3" fill="#202020"/></svg><svg style="left:568.2px;top:363.1px;" width="4" height="4"><circle cx="1.6" cy="1.6" r="1.65" fill="#f4f4f4"/></svg>
<svg style="left:566.5px;top:370.5px;" width="7" height="7"><circle cx="3.3" cy="3.3" r="3.3" fill="#202020"/></svg>
<div class="t" style="left:577px;top:361px;color:#d6d6d6;">B</div>
<div class="t" style="left:577px;top:370.9px;color:#d6d6d6;">B+</div>
<style>.rd{width:6.6px;height:6.6px;border-radius:50%;background:#202020;}.rdd{position:absolute;width:3.2px;height:3.2px;border-radius:50%;background:#f2f2f2;}</style>
<!-- print position -->
<div class="grp" style="left:408.3px;top:383.5px;width:184.2px;height:31px;"></div>
<div class="bar" style="left:408.3px;top:384px;width:184.2px;height:9.7px;"></div>
<div class="t" style="left:479.3px;top:385.3px;font-size:7.6px;color:#d6d6d6;">Print Position</div>
<div class="t" style="left:422px;top:402.5px;color:#c8c8c8;">Left:</div>
<div class="in" style="left:437px;top:398.5px;width:26.7px;height:12.2px;background:#222;border-color:#8a8a8a;"></div>
<div class="t" style="left:439.2px;top:401.5px;color:#5d90ea;">0.00</div>
<div class="t" style="left:472.5px;top:402.5px;color:#c8c8c8;">Top:</div>
<div class="in" style="left:486.7px;top:398.5px;width:26.7px;height:12.2px;background:#222;border-color:#8a8a8a;"></div>
<div class="t" style="left:489px;top:401.5px;color:#5d90ea;">0.00</div>
<svg style="left:525.7px;top:395.9px;" width="7" height="7"><circle cx="3.3" cy="3.3" r="3.3" fill="#202020"/></svg><svg style="left:527.4px;top:397.6px;" width="4" height="4"><circle cx="1.6" cy="1.6" r="1.65" fill="#f4f4f4"/></svg>
<svg style="left:525.7px;top:405.9px;" width="7" height="7"><circle cx="3.3" cy="3.3" r="3.3" fill="#202020"/></svg>
<div class="t" style="left:535.8px;top:395.6px;color:#d6d6d6;">Set position</div>
<div class="t" style="left:535.8px;top:405.9px;color:#d6d6d6;">Move</div>
<!-- progress -->
<div class="a" style="left:404.2px;top:418.6px;width:192.2px;height:7.6px;background:linear-gradient(#262626,#333 40%,#343434);"></div>
<div class="t" style="left:494.5px;top:418.8px;font-size:7.4px;color:#e0e0e0;">0%</div>
<div class="a" style="left:404.2px;top:427px;width:192.5px;height:12.7px;background:#393939;border:1px solid #8a8a8a;border-radius:1.5px;box-sizing:border-box;"></div>
<div class="t" style="left:472.5px;top:429.7px;color:#d4d4d4;">1 thumb selected</div>

<!--STATUS-->
<div class="a" id="status" style="left:0.5px;top:442px;width:598.5px;height:14px;background:#454545;border-top:1.9px solid #c6c6c6;border-left:1px solid #8a8a8a;border-right:1px solid #8a8a8a;border-bottom:0.7px solid #8a8a8a;border-radius:0 0 2px 2px;box-sizing:border-box;"></div>
<div class="t" style="left:3px;top:445.9px;font-size:7.43px;color:#d6d6d6;"><b style="color:#f0f0f0;font-size:7.72px;">(1) a2e8c86861b5a4f17711254f4d20d224.jpg</b>: 868,679, 7.47 x 4.20 in @ 257 PPI, 1920 x 1080, ICC: *sRGB IEC61966-2.1*</div>

</div>
</body></html>
